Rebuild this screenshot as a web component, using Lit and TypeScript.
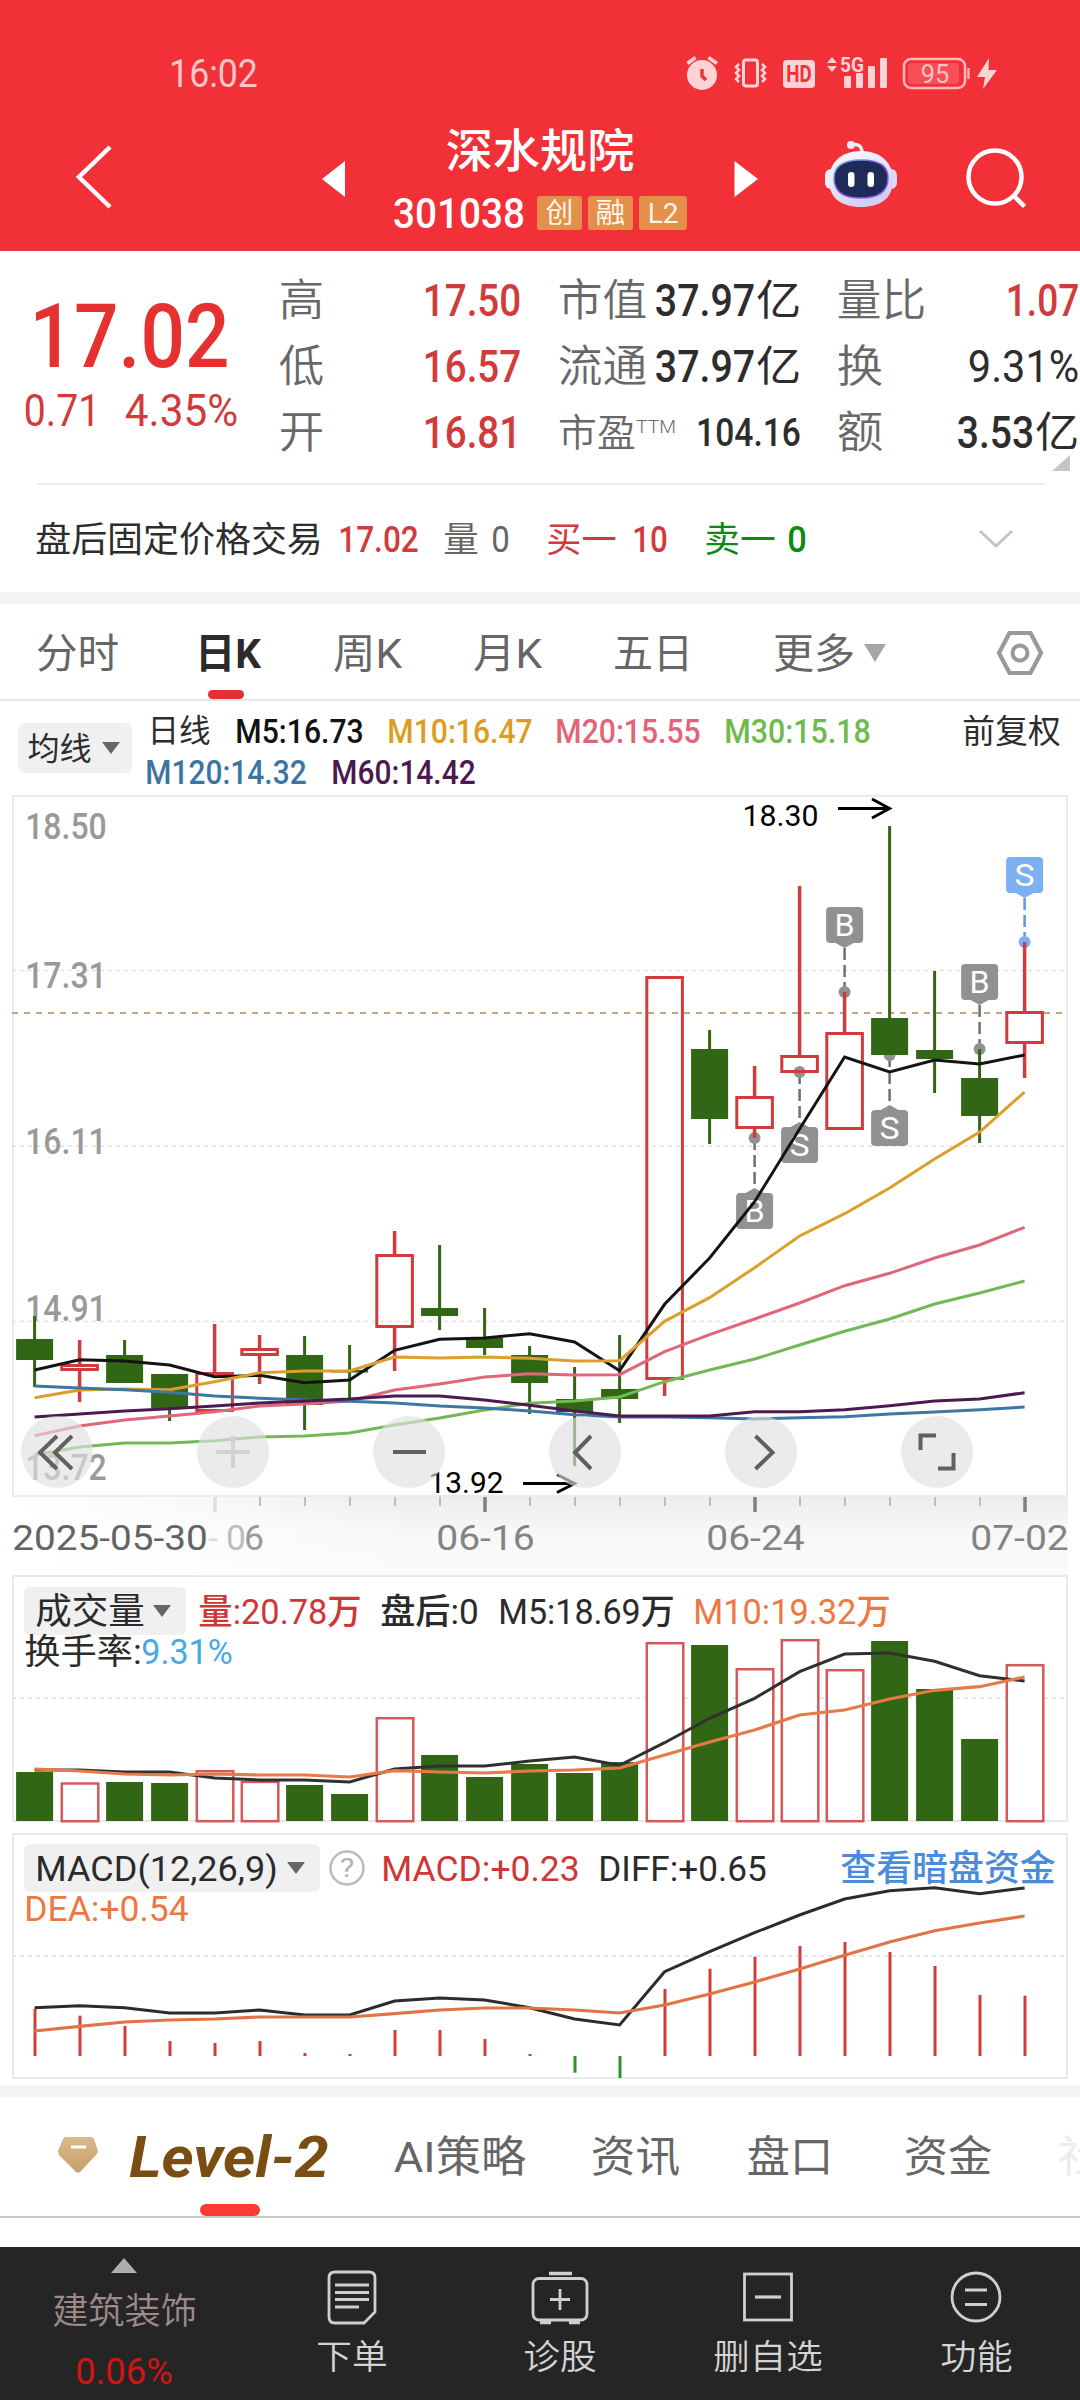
import { LitElement, html, svg, css } from "lit";
import { customElement } from "lit/decorators.js";

const RED = "#cf3c3b";
const GREEN = "#306614";
const STEP = 45;
const X0 = 34.6;
const cx = (i: number) => X0 + STEP * i;

/** Text fitted to a given ink width; the box is as tall as the capitals, so rows centre on them. */
const fit = (s: string, w: number, size: number, cls = "") => {
  const b = size * 0.05;
  const h = Math.round(size * 0.72);
  return html`<svg class="t ${cls}" width=${w} height=${h}>
    <text x=${-b} y=${h} font-size=${size} textLength=${w + 2 * b} lengthAdjust="spacingAndGlyphs">${s}</text>
  </svg>`;
};

/** The same fitted text, placed inside a chart. */
const label = (s: string, x: number, y: number, w: number, size: number, cls = "") => svg`
  <text class=${cls} x=${x - size * 0.05} y=${y} font-size=${size} textLength=${w + size * 0.1} lengthAdjust="spacingAndGlyphs">${s}</text>`;

const line = (ys: number[], color: string, w = 3) => svg`
  <polyline fill="none" stroke=${color} stroke-width=${w} points=${ys.map((y, i) => `${cx(i)},${y}`).join(" ")} />`;

// up (1) or down (0), high, body top, body bottom, low
const CANDLES: number[][] = [
  [0, 1316, 1339, 1360, 1387], [1, 1340, 1364, 1371, 1402], [0, 1340, 1355, 1383, 1383],
  [0, 1374, 1374, 1408, 1421], [1, 1324, 1372, 1412, 1412], [1, 1335, 1348, 1356, 1384],
  [0, 1336, 1355, 1405, 1430], [0, 1345, 1370, 1372.5, 1400], [1, 1231, 1254, 1328, 1371],
  [0, 1245, 1308, 1316, 1330], [0, 1308, 1338, 1348, 1355], [0, 1346, 1355, 1383, 1414],
  [0, 1367, 1399, 1412, 1466], [0, 1335, 1389, 1399, 1423], [1, 976, 976, 1380, 1396],
  [0, 1030, 1049, 1119, 1144], [1, 1066, 1096, 1129, 1138], [1, 886, 1055, 1073, 1073],
  [1, 992, 1032, 1130, 1130], [0, 826, 1018, 1055, 1055], [0, 971, 1050, 1059, 1093],
  [0, 1049, 1078, 1116, 1143], [1, 942, 1011, 1044, 1078],
];
const M5 = [1370, 1359.7, 1361, 1365, 1376.7, 1375.3, 1382.7, 1380, 1350.3, 1339.3, 1338, 1333.7, 1342, 1370.7, 1304.3, 1258, 1201.7, 1129, 1057, 1072, 1060, 1064, 1055];
const M10 = [1397.7, 1390, 1389, 1389.7, 1381.7, 1372.7, 1371, 1371, 1357, 1358, 1357, 1358.3, 1361, 1360.7, 1321.3, 1297.7, 1267.7, 1236, 1213.7, 1188, 1159, 1132, 1092];
const M20 = [1435.7, 1426, 1420, 1416, 1411.7, 1406, 1404, 1401, 1390, 1384, 1377, 1373.7, 1375, 1374.7, 1351.7, 1334.7, 1319, 1303, 1285.7, 1273.3, 1258, 1245, 1227.3];
const M30 = [1455, 1447, 1443, 1443, 1440.7, 1437, 1436, 1433, 1425, 1418, 1410, 1403.3, 1401, 1397, 1381.7, 1370, 1359, 1345, 1331.3, 1319, 1304, 1293, 1281];
const M120 = [1386, 1388, 1389.7, 1392.3, 1396, 1398.3, 1400, 1401.3, 1403, 1406, 1408, 1411, 1414.7, 1417, 1417, 1417.7, 1419, 1417.7, 1416.7, 1414, 1412, 1409.7, 1407];
const M60 = [1417, 1414, 1411, 1408.7, 1406, 1403, 1401, 1399, 1396, 1396, 1400, 1405.3, 1411, 1416, 1416, 1416, 1411.7, 1411.7, 1409.7, 1405.7, 1401, 1399, 1392.7];

// letter, candle, dot y, box top
const TRADES: [string, number, number, number][] = [
  ["B", 16, 1138, 1193], ["S", 17, 1072, 1127], ["B", 18, 992, 907],
  ["S", 19, 1055, 1110], ["B", 21, 1049, 964], ["S", 22, 942, 857],
];

const VOL: number[] = [1772, 1782.3, 1782, 1783, 1770, 1780.7, 1785, 1794, 1717, 1755, 1777, 1764, 1773, 1762, 1642, 1645, 1668, 1639, 1669, 1641, 1689, 1739, 1664];
const V5 = [1770, 1770, 1772, 1772, 1778, 1780, 1780, 1782, 1769, 1766, 1766, 1761, 1757, 1765.3, 1742.7, 1718.3, 1698.3, 1671.7, 1654, 1653, 1661.3, 1675.7, 1681];
const V10 = [1769, 1771, 1774, 1775, 1774, 1775, 1775, 1777, 1770.7, 1772, 1773, 1771, 1770, 1768, 1755, 1742, 1730, 1715, 1710, 1699, 1690.3, 1686.7, 1677];

const MACD = [2009, 2015.7, 2026, 2041, 2043, 2041, 2053, 2054, 2030, 2030, 2039, 2054, 2072.7, 2078, 1989, 1968.7, 1956.7, 1946, 1942, 1952, 1966, 1995, 1995.7];
const DIFF = [2007.7, 2005.7, 2007.7, 2013, 2013, 2010, 2015, 2015, 2001, 1998, 2000, 2007.7, 2019, 2025, 1971.7, 1951.7, 1932.7, 1915, 1899, 1890.7, 1887.7, 1893.7, 1888];
const DEA = [2031, 2026.3, 2022, 2020, 2019, 2017, 2017, 2017, 2013.7, 2010, 2008, 2008, 2010, 2013, 2005, 1994, 1982, 1969, 1955.3, 1942, 1930.7, 1923, 1916];

const base = css`
  :host { display: block; }
  svg { display: block; overflow: visible; flex: none; }
  text { font-family: Roboto, "Noto Sans CJK SC", sans-serif; }
  .t { fill: currentColor; }
  .s { font-weight: 450; }
  .m { font-weight: 500; }
  .b { font-weight: 700; }
  .l { font-weight: 350; }
`;

@customElement("top-bar")
export class TopBar extends LitElement {
  static styles = [base, css`
    .bar { height: 251px; background: #f23038; color: #fff; box-sizing: border-box; padding-top: 54px; }
    .status { height: 38px; display: flex; align-items: center; justify-content: space-between; padding: 0 82px 0 171px; color: #ffc6c8; }
    .nav { height: 120px; margin-top: 30px; display: grid; grid-template-columns: 322px 73px 292px 48px 90px 144px 1fr; align-items: start; }
    .back { margin: 23px 0 0 76px; }
    .tri { margin-top: 39px; }
    .mid { display: flex; flex-direction: column; gap: 31px; padding-top: 12px; }
    .name { padding-left: 53px; }
    .code { display: flex; align-items: center; gap: 6px; height: 30px; }
    .code > svg { margin-right: 8px; }
    .tag { width: 45px; height: 34px; border-radius: 3px; background: #e4904a; display: grid; place-items: center; color: #fff6e8; }
    .wide { width: 48px; }
    .bot { margin-top: 17px; }
    .find { margin: 25px 0 0 -4px; }
  `];
  render() {
    const pink = "#ffd3d5";
    return html`<div class="bar">
      <div class="status">
        ${fit("16:02", 85, 38)}
        <svg width="312" height="34" viewBox="686 55 312 34">
          <circle cx="702" cy="74" r="15" fill=${pink} />
          <path d="M687.5 62.5 695.5 56.5M708.500 56.500 717 62.500" stroke=${pink} stroke-width="3.500" />
          <path d="M702 68v7l4 4" fill="none" stroke="#f23038" stroke-width="3.500" />
          <rect x="743.500" y="59" width="14" height="26" rx="2.500" fill="none" stroke=${pink} stroke-width="3" />
          <path d="M739 63l-3 3 3 3-3 3 3 3-3 3 3 3M762 63l3 3-3 3 3 3-3 3 3 3-3 3" fill="none" stroke=${pink} stroke-width="2.500" />
          <rect x="783" y="59" width="32" height="28" rx="4" fill=${pink} />
          <g fill="#f23038">${label("HD", 787.500, 81, 23, 23, "b")}</g>
          <path d="M827 62l5-6 5 6zM827 65l5 6 5-6z" fill=${pink} />
          <g fill=${pink}>${label("5G", 841, 71, 22, 21, "b")}
            <rect x="844" y="75" width="7" height="12" rx="1" /><rect x="856" y="72" width="7" height="15" rx="1" />
            <rect x="868" y="65" width="7" height="22" rx="1" /><rect x="880" y="57" width="7" height="30" rx="1" />
          </g>
          <rect x="904" y="58" width="61" height="29" rx="7" fill="none" stroke="#ffb9bb" stroke-width="2.500" />
          <rect x="908" y="62" width="51" height="21" rx="3" fill="#f74f55" />
          <g fill="#ffc2c4">${label("95", 922, 82, 26, 25)}</g>
          <path d="M968.500 67v11" stroke="#ffb1b4" stroke-width="2.500" />
          <path d="M989 57 977 76h8l-2 12 14-19h-8.500z" fill=${pink} />
        </svg>
      </div>
      <div class="nav">
        <svg class="back" width="36" height="64"><path d="M34 2 3 32 34 62" fill="none" stroke="#fff" stroke-width="4.500" /></svg>
        <svg class="tri" width="23" height="36"><path d="M23 0V36L0 18z" fill="#fff" /></svg>
        <div class="mid">
          <div class="name">${fit("深水规院", 184, 46, "m")}</div>
          <div class="code">${fit("301038", 128, 42, "m")}
            <span class="tag">${fit("创", 25, 28)}</span><span class="tag">${fit("融", 27, 28)}</span><span class="tag wide">${fit("L2", 28, 27)}</span>
          </div>
        </div>
        <svg class="tri" width="24" height="36" viewBox="-0.500 0 24 36"><path d="M0 0V36L23.500 18z" transform="translate(47 0)" fill="#fff" /></svg>
        <i></i>
        <svg class="bot" width="72" height="68" viewBox="825 141 72 68">
          <defs>
            <linearGradient id="shell" x1="0" y1="0" x2="0.600" y2="1"><stop offset="0" stop-color="#fff" /><stop offset="1" stop-color="#cfcdf3" /></linearGradient>
            <linearGradient id="rim" x1="0" y1="0" x2="1" y2="1"><stop offset="0" stop-color="#7cc3f2" /><stop offset="0.500" stop-color="#7a4ee0" /><stop offset="1" stop-color="#8a66f0" /></linearGradient>
          </defs>
          <path d="M851 147c7-2 11 1 11 8" fill="none" stroke="#f3eefd" stroke-width="3.500" />
          <circle cx="851" cy="147" r="4" fill="#efe6fa" />
          <rect x="825" y="171" width="12" height="20" rx="6" fill="#efedfc" /><rect x="885" y="171" width="12" height="20" rx="6" fill="#dcd9f8" />
          <path d="M861 153c20 0 32 12 32 29 0 18-12 27-32 27s-32-9-32-27c0-17 12-29 32-29z" fill="url(#shell)" />
          <path d="M861 162c17 0 27 6 27 18 0 14-10 20-27 20s-27-6-27-20c0-12 10-18 27-18z" fill="#202a58" stroke="url(#rim)" stroke-width="1.500" />
          <rect x="848" y="174" width="6.500" height="15" rx="3.200" fill="#fff" /><rect x="867.500" y="174" width="6.500" height="15" rx="3.200" fill="#fff" />
        </svg>
        <svg class="find" width="60" height="60" viewBox="964 147 60 60">
          <circle cx="994" cy="177" r="26.500" fill="none" stroke="#fff" stroke-width="4.500" /><path d="M1013 196 1023.500 206.500" stroke="#fff" stroke-width="4.500" />
        </svg>
      </div>
    </div>`;
  }
}

@customElement("quote-panel")
export class QuotePanel extends LitElement {
  static styles = [base, css`
    .panel { height: 341px; background: #fff; border-bottom: 12px solid #f4f4f4; color: #2d2d2d; }
    .quote { height: 232px; display: grid; grid-template-columns: 281px 245px 273px 1fr; }
    .price { color: #e5312f; padding: 52px 0 0 34px; }
    .chg { display: flex; gap: 29px; color: #d13b3b; margin: 27px 0 0 -8px; }
    .col { display: flex; flex-direction: column; padding-top: 16px; }
    .pair { height: 66px; display: flex; align-items: center; justify-content: space-between; color: #686868; }
    .c1 { width: 238px; } .c2 { width: 239px; margin-left: 34px; } .c3 { width: 238px; margin-left: 40px; }
    .red { color: #d13b3b; } .dark { color: #2d2d2d; display: flex; align-items: center; gap: 5px; }
    .ttm { display: flex; align-items: flex-start; gap: 3px; }
    .corner { margin: -10px 7px 0 auto; }
    .after { height: 110px; margin: 0 35px 0 37px; border-top: 2px solid #ececec; display: grid; grid-template-columns: 303px 105px 48px 55px 86px 72px 83px 190px 36px; align-items: center; box-sizing: border-box; }
    .gray { color: #666; } .green { color: #0d8a10; }
  `];
  render() {
    return html`<div class="panel">
      <div class="quote">
        <div class="price">${fit("17.02", 191, 89, "m")}<div class="chg">${fit("0.71", 72, 44, "s")}${fit("4.35%", 109, 44, "s")}</div></div>
        <div class="col c1">
          ${[["高", "17.50"], ["低", "16.57"], ["开", "16.81"]].map(([k, v]) => html`<div class="pair">${fit(k, 41, 44, "l")}${fit(v, 94, 44, "m red")}</div>`)}
        </div>
        <div class="col c2">
          <div class="pair">${fit("市值", 85, 44, "l")}<span class="dark">${fit("37.97", 96, 44, "m")}${fit("亿", 41, 42)}</span></div>
          <div class="pair">${fit("流通", 85, 44, "l")}<span class="dark">${fit("37.97", 96, 44, "m")}${fit("亿", 41, 42)}</span></div>
          <div class="pair"><span class="ttm">${fit("市盈", 74, 38, "l")}${fit("TTM", 38, 19, "l")}</span><span class="dark">${fit("104.16", 101, 38, "m")}</span></div>
        </div>
        <div class="col c3">
          <div class="pair">${fit("量比", 85, 44, "l")}${fit("1.07", 69, 44, "m red")}</div>
          <div class="pair">${fit("换", 42, 44, "l")}<span class="dark">${fit("9.31%", 107, 44, "s")}</span></div>
          <div class="pair">${fit("额", 42, 44, "l")}<span class="dark">${fit("3.53", 73, 44, "m")}${fit("亿", 40, 42)}</span></div>
          <svg class="corner" width="18" height="16"><path d="M18 0V16H0z" fill="#c6c6c6" /></svg>
        </div>
      </div>
      <div class="after">
        ${fit("盘后固定价格交易", 284, 35.5)}${fit("17.02", 77, 36, "m red")}
        ${fit("量", 32, 35, "gray")}${fit("0", 15, 36, "gray s")}
        ${fit("买一", 67, 35, "red")}${fit("10", 32, 36, "m red")}
        ${fit("卖一", 68, 35, "green")}${fit("0", 16, 36, "m green")}
        <svg width="34" height="18"><path d="M1 1 17 16 33 1" fill="none" stroke="#c4c4c4" stroke-width="3" /></svg>
      </div>
    </div>`;
  }
}

@customElement("period-tabs")
export class PeriodTabs extends LitElement {
  static styles = [base, css`
    .tabs { height: 97px; box-sizing: border-box; border-bottom: 2px solid #e6e6e6; display: grid; padding-left: 38px; color: #666;
      grid-template-columns: 160px 137px 140px 140px 160px 89px 132px 1fr; align-items: center; background: #fff; padding-top: 2px; }
    .on { color: #2b2b2b; align-self: stretch; display: grid; grid-template-rows: 1fr 9px; align-items: center; padding-top: 9px; }
    .on svg { margin-left: -1px; }
    .on i { width: 36px; height: 9px; border-radius: 5px; background: #e5302f; margin-left: 10px; }
    .ma { height: 94px; box-sizing: border-box; display: grid; grid-template-columns: 129px 1fr; padding: 0 20px 0 18px; background: #fff; color: #2d2d2d; }
    .pick { margin-top: 22px; width: 114px; height: 50px; border-radius: 7px; background: #f0f0f0; display: flex; align-items: center; gap: 12px; padding-left: 11px; box-sizing: border-box; }
    .rows { padding-top: 9px; }
    .row { height: 41px; display: grid; align-items: center; }
    .r1 { grid-template-columns: 88px 152px 168px 169px 238px 1fr; margin-left: 2px; }
    .r2 { grid-template-columns: 186px 1fr; }
    .k { color: #111; } .o { color: #dd9c22; } .p { color: #e36478; } .g { color: #6fba4f; } .u { color: #3b76a3; } .v { color: #4b1850; }
  `];
  render() {
    return html`<div class="tabs">
        ${fit("分时", 79, 41)}
        <div class="on">${fit("日K", 62, 41, "b")}<i></i></div>
        ${fit("周K", 65, 41)}${fit("月K", 65, 41)}${fit("五日", 76, 41)}${fit("更多", 78, 41)}
        <svg width="22" height="18"><path d="M0 0H22L11 18z" fill="#a6a6a6" /></svg>
        <svg width="48" height="46" viewBox="0 0 48 46"><path d="M13.500 3H34.500L45 23 34.500 43H13.500L3 23z" fill="none" stroke="#999" stroke-width="4.200" stroke-linejoin="round" /><circle cx="24" cy="23" r="7.500" fill="none" stroke="#999" stroke-width="4" /></svg>
      </div>
      <div class="ma">
        <div class="pick">${fit("均线", 61, 32)}<svg width="18" height="12"><path d="M0 0H18L9 12z" fill="#666" /></svg></div>
        <div class="rows">
          <div class="row r1">${fit("日线", 60, 32)}${fit("M5:16.73", 125, 33, "m k")}${fit("M10:16.47", 142, 33, "m o")}${fit("M20:15.55", 142, 33, "m p")}${fit("M30:15.18", 143, 33, "m g")}${fit("前复权", 95, 33)}</div>
          <div class="row r2">${fit("M120:14.32", 158, 33, "m u")}${fit("M60:14.42", 141, 33, "m v")}</div>
        </div>
      </div>`;
  }
}

@customElement("candle-chart")
export class CandleChart extends LitElement {
  static styles = [base, css`
    svg { background: #fff; }
    .axis { fill: #999; } .date { fill: #838383; } .now { fill: #636363; } .mark { fill: #fff; }
    .icon { fill: none; stroke: #606060; stroke-width: 4; }
    .dim { stroke: #d2d2d2; }
  `];
  trade([s, i, dot, top]: [string, number, number, number]) {
    const x = cx(i);
    const fill = i === 22 ? "#7bb0f1" : "#919191";
    const up = top < dot;
    const edge = up ? top + 36 : top;
    const tip = up ? edge + 5 : edge - 5;
    return svg`
      <path d="M${x} ${up ? tip : dot}V${up ? dot : tip}" stroke=${i === 22 ? "#5f9be0" : "#707070"} stroke-width="2.500" stroke-dasharray="12 5" />
      <circle cx=${x} cy=${dot} r="6" fill=${fill} />
      <path d="M${x - 9} ${edge}L${x} ${tip}L${x + 9} ${edge}z" fill=${fill} />
      <rect x=${x - 18.500} y=${top} width="37" height="36" rx="4" fill=${fill} />
      ${label(s, x - 8.500, top + 29, 17, 31, "mark")}`;
  }
  candle([up, hi, a, b, lo]: number[], i: number) {
    const x = cx(i);
    if (up) return svg`
      <path d="M${x} ${hi}V${a + 1.500}M${x} ${b - 1.500}V${lo}" stroke=${RED} stroke-width="3.500" />
      <rect x=${x - 17.800} y=${a + 1.500} width="35.600" height=${b - a - 3} fill="none" stroke=${RED} stroke-width="3" />`;
    return svg`<path d="M${x} ${hi}V${lo}" stroke=${GREEN} stroke-width="3" /><rect x=${x - 18.500} y=${a} width="37" height=${b - a} fill=${GREEN} />`;
  }
  render() {
    return html`<svg width="1080" height="781" viewBox="0 795 1080 781">
      <defs>
        <linearGradient id="down" x1="0" y1="0" x2="0" y2="1"><stop offset="0" stop-color="#ececec" /><stop offset="0.400" stop-color="#f7f7f7" /><stop offset="1" stop-color="#fbfbfb" /></linearGradient>
        <linearGradient id="side"><stop offset="0" stop-color="#fff" /><stop offset="0.500" stop-color="#fff" stop-opacity="0.600" /><stop offset="1" stop-color="#fff" stop-opacity="0" /></linearGradient>
      </defs>
      <rect x="12" y="1496" width="1056" height="80" fill="url(#down)" />
      <rect x="12" y="1496" width="400" height="80" fill="url(#side)" />
      <rect x="13" y="796" width="1054" height="700" fill="#fff" stroke="#ebebeb" stroke-width="2" />
      ${[970.5, 1146, 1321.5].map((y) => svg`<path d="M12 ${y}H1066" stroke="#e2e2e2" stroke-width="1.500" stroke-dasharray="4 4" />`)}
      <path d="M12 1013H1066" stroke="#c1a67a" stroke-width="2" stroke-dasharray="6 6" />
      ${[["18.50", 838.5], ["17.31", 988], ["16.11", 1154], ["14.91", 1321], ["13.72", 1479.5]].map(([s, y]) => label(s as string, 27, y as number, 78, 36, "m axis"))}
      ${TRADES.map((t) => this.trade(t))}
      ${CANDLES.map((c, i) => this.candle(c, i))}
      ${line(M5, "#141414")}${line(M10, "#dc9f2c")}${line(M20, "#e0667a")}${line(M30, "#72b955")}${line(M120, "#3e77a2")}${line(M60, "#4c1a50")}
      ${label("18.30", 744, 826, 73, 29.5)}
      <path d="M838 808.500H889M872 799 889.500 808.500 872 818" fill="none" stroke="#000" stroke-width="3" />
      ${label("13.92", 430, 1493, 72, 29.5)}
      <path d="M523 1483.500H574M557 1474.500 574.500 1483.500 557 1492.500" fill="none" stroke="#000" stroke-width="3" />
      ${[57, 233, 409, 585, 761, 937].map((x) => svg`<circle cx=${x} cy="1452" r="36" fill="#e0e0e0" fill-opacity="0.650" />`)}
      <path class="icon" d="M57 1436 40 1452.500 57 1469M72 1436 55 1452.500 72 1469M393 1452H426M591 1436 575 1452.500 591 1469M755.500 1436 772.500 1452.500 755.500 1469M936 1435.500H920.500V1450M938 1468.500H953.500V1453" />
      <path class="icon dim" d="M216 1452H250M233 1436V1468" />
      ${CANDLES.map((_, i) => {
        if (i < 4) return null;
        const big = i % 6 === 4;
        return svg`<path d="M${cx(i) + 0.4} 1497V${big ? 1512 : 1506}" stroke=${big ? (i === 4 ? "#dedede" : "#808080") : "#bdbdbd"} stroke-width=${big ? 3.5 : 2} />`;
      })}
      ${label("2025-05-30", 14, 1550, 192, 35.5, "s now")}
      <text class="s" x="208" y="1550" font-size="35.500"><tspan fill="#dadada">-</tspan><tspan x="226" fill="#bdbdbd">0</tspan><tspan x="244" fill="#999">6</tspan></text>
      ${label("06-16", 438, 1550, 95, 35.5, "s date")}${label("06-24", 708, 1550, 95, 35.5, "s date")}${label("07-02", 972, 1550, 95, 35.5, "s date")}
    </svg>`;
  }
}

const legendCss = css`
  .box { display: grid; }
  .box > * { grid-area: 1 / 1; }
  .legend { padding: 11px 0 0 24px; color: #2b2b2b; z-index: 1; }
  .row { height: 48px; display: grid; align-items: center; }
  .pick { height: 48px; box-sizing: border-box; border-radius: 6px; background: #f0f0f0; display: flex; align-items: center; justify-content: space-between; padding: 0 15px 0 13px; }
  .sub { display: flex; align-items: center; gap: 3px; padding-left: 2px; height: 33px; }
  .r { color: #cf3637; } .o { color: #ee7742; } .u { color: #48a9e2; } .lk { color: #4a8cd9; }
`;

@customElement("volume-chart")
export class VolumeChart extends LitElement {
  static styles = [base, legendCss, css`
    .row { grid-template-columns: 162px 14px 182px 118px 195px 1fr; }
  `];
  render() {
    return html`<div class="box">
      <svg width="1080" height="257" viewBox="0 1576 1080 257">
        <rect x="13" y="1576" width="1054" height="245" fill="#fff" stroke="#e9e9e9" stroke-width="2" />
        <path d="M12 1698H1066" stroke="#e6e6e6" stroke-width="2" stroke-dasharray="4 4" />
        ${VOL.map((y, i) => CANDLES[i][0]
          ? svg`<rect x=${cx(i) - 17.8} y=${y + 1.2} width="36.500" height=${1820 - y} fill="#fff" stroke="#d25a5a" stroke-width="2.500" />`
          : svg`<rect x=${cx(i) - 18.5} y=${y} width="37" height=${1821 - y} fill=${GREEN} />`)}
        ${line(V5, "#303030")}${line(V10, "#e67a48", 3.2)}
      </svg>
      <div class="legend">
        <div class="row">
          <span class="pick">${fit("成交量", 106, 36)}<svg width="18" height="12"><path d="M0 0H18L9 12z" fill="#666" /></svg></span><i></i>
          ${fit("量:20.78万", 160, 35, "r s")}${fit("盘后:0", 95, 35, "s")}${fit("M5:18.69万", 173, 35, "s")}${fit("M10:19.32万", 194, 35, "o s")}
        </div>
        <div class="sub">${fit("换手率:", 114, 35)}${fit("9.31%", 88, 35, "u s")}</div>
      </div>
    </div>`;
  }
}

@customElement("macd-chart")
export class MacdChart extends LitElement {
  static styles = [base, legendCss, css`
    .row { grid-template-columns: 296px 9px 54px 217px 242px 1fr; }
  `];
  render() {
    return html`<div class="box">
      <svg width="1080" height="252" viewBox="0 1833 1080 252">
        <rect x="13" y="1834" width="1054" height="244" fill="#fff" stroke="#e9e9e9" stroke-width="2" />
        <path d="M12 1956H1066" stroke="#e6e6e6" stroke-width="2" stroke-dasharray="4 4" />
        ${MACD.map((y, i) => svg`<path d="M${cx(i) + 0.4} ${y}V2056" stroke=${y > 2056 ? "#2f9423" : RED} stroke-width="3" />`)}
        ${line(DIFF, "#2c2c2c")}${line(DEA, "#e07447", 3.2)}
      </svg>
      <div class="legend">
        <div class="row">
          <span class="pick">${fit("MACD(12,26,9)", 239, 35, "s")}<svg width="18" height="12"><path d="M0 0H18L9 12z" fill="#666" /></svg></span><i></i>
          <svg width="36" height="36"><circle cx="18" cy="18" r="16.500" fill="none" stroke="#bbb" stroke-width="2.500" /><g fill="#b0b0b0">${label("?", 12, 27, 12, 26)}</g></svg>
          ${fit("MACD:+0.23", 195, 35, "r s")}${fit("DIFF:+0.65", 165, 35, "s")}${fit("查看暗盘资金", 212, 36, "lk s")}
        </div>
        <div class="sub">${fit("DEA:+0.54", 161, 35, "o s")}</div>
      </div>
    </div>`;
  }
}

@customElement("info-tabs")
export class InfoTabs extends LitElement {
  static styles = [base, css`
    .tabs { height: 133px; box-sizing: border-box; border-top: 12px solid #f4f4f4; border-bottom: 2px solid #cbcbcb; background: #fff; color: #666; overflow: hidden;
      display: grid; grid-template-columns: 74px 264px 197px 156px 157px 154px 1fr; align-items: center; padding-left: 58px; }
    .on { align-self: stretch; display: grid; grid-template-rows: 1fr 12px; align-items: center; color: #7a4d12; padding-top: 12px; }
    .on i { width: 60px; height: 12px; border-radius: 6px; background: #fc3c33; margin-left: 68px; }
    .lv { font-weight: 700; font-style: italic; }
    .faint { color: #ececec; }
    .gem { margin-bottom: 4px; }
    .gap { height: 29px; background: #fff; }
  `];
  render() {
    return html`<div class="tabs">
      <svg class="gem" width="40" height="36"><defs><linearGradient id="gem" x1="0" y1="0" x2="0" y2="1"><stop offset="0" stop-color="#d9b98c" /><stop offset="1" stop-color="#c9a068" /></linearGradient></defs>
        <path d="M8 0H33Q35 0 36 2L40 14Q40 16 38 18L22 35Q20 36 18 35L1 18Q0 16 0 14L5 2Q6 0 8 0z" fill="url(#gem)" /><path d="M13 10H28" stroke="#fff" stroke-width="3" /></svg>
      <div class="on">${fit("Level-2", 194, 57, "lv")}<i></i></div>
      ${fit("AI策略", 128, 43)}${fit("资讯", 85, 43)}${fit("盘口", 82, 43)}${fit("资金", 84, 43)}${fit("社", 42, 43, "faint")}
    </div><div class="gap"></div>`;
  }
}

@customElement("bottom-bar")
export class BottomBar extends LitElement {
  static styles = [base, css`
    .bar { height: 153px; background: #252525; color: #d4d4d4; display: grid; grid-template-columns: 248px 208px 208px 208px 1fr; }
    .idx { display: flex; flex-direction: column; align-items: center; color: #9c8b89; padding: 11px 0 0 0; }
    .idx .name { margin: 25px 0 34px; }
    .red { color: #d21414; }
    .act { display: flex; flex-direction: column; align-items: center; padding-top: 22px; gap: 19px; }
    .ic { fill: none; stroke: #cfcfcf; stroke-width: 2.8; }
  `];
  render() {
    return html`<div class="bar">
      <div class="idx"><svg width="26" height="15"><path d="M13 0 26 15H0z" fill="#adadad" /></svg>
        <div class="name">${fit("建筑装饰", 141, 36, "l")}</div>${fit("0.06%", 94, 36.5, "red")}</div>
      <div class="act"><svg class="ic" width="50" height="56"><path d="M8 3H42Q48 3 48 9V43L37 54H8Q2 54 2 48V9Q2 3 8 3z" /><path d="M8 16H42M8 23.500H42M8 30.500H42M8 38H32" stroke-width="3" /></svg>${fit("下单", 68, 34.5, "l")}</div>
      <div class="act"><svg class="ic" width="58" height="56"><rect x="2" y="9.500" width="54" height="41.500" rx="6" /><path d="M18 4.500H41M9 53.500H20M38 53.500H49" stroke-width="3.400" /><path d="M29 20V41M19 30.500H39" /></svg>${fit("诊股", 70, 34.5, "l")}</div>
      <div class="act"><svg class="ic" width="50" height="56"><rect x="1.500" y="5" width="47" height="46" /><path d="M12 28H38" stroke-width="3.200" /></svg>${fit("删自选", 106, 34.5, "l")}</div>
      <div class="act"><svg class="ic" width="52" height="56"><circle cx="26" cy="28" r="24" /><path d="M15 21H37M15 35.500H37" stroke-width="3.200" /></svg>${fit("功能", 69, 34.5, "l")}</div>
    </div>`;
  }
}

@customElement("app-root")
export class AppRoot extends LitElement {
  static styles = css`
    :host { display: block; width: 1080px; height: 2400px; overflow: hidden; background: #fff; }
    .page { display: flex; flex-direction: column; }
  `;
  render() {
    return html`<div class="page">
      <top-bar></top-bar><quote-panel></quote-panel><period-tabs></period-tabs>
      <candle-chart></candle-chart><volume-chart></volume-chart><macd-chart></macd-chart>
      <info-tabs></info-tabs><bottom-bar></bottom-bar>
    </div>`;
  }
}
